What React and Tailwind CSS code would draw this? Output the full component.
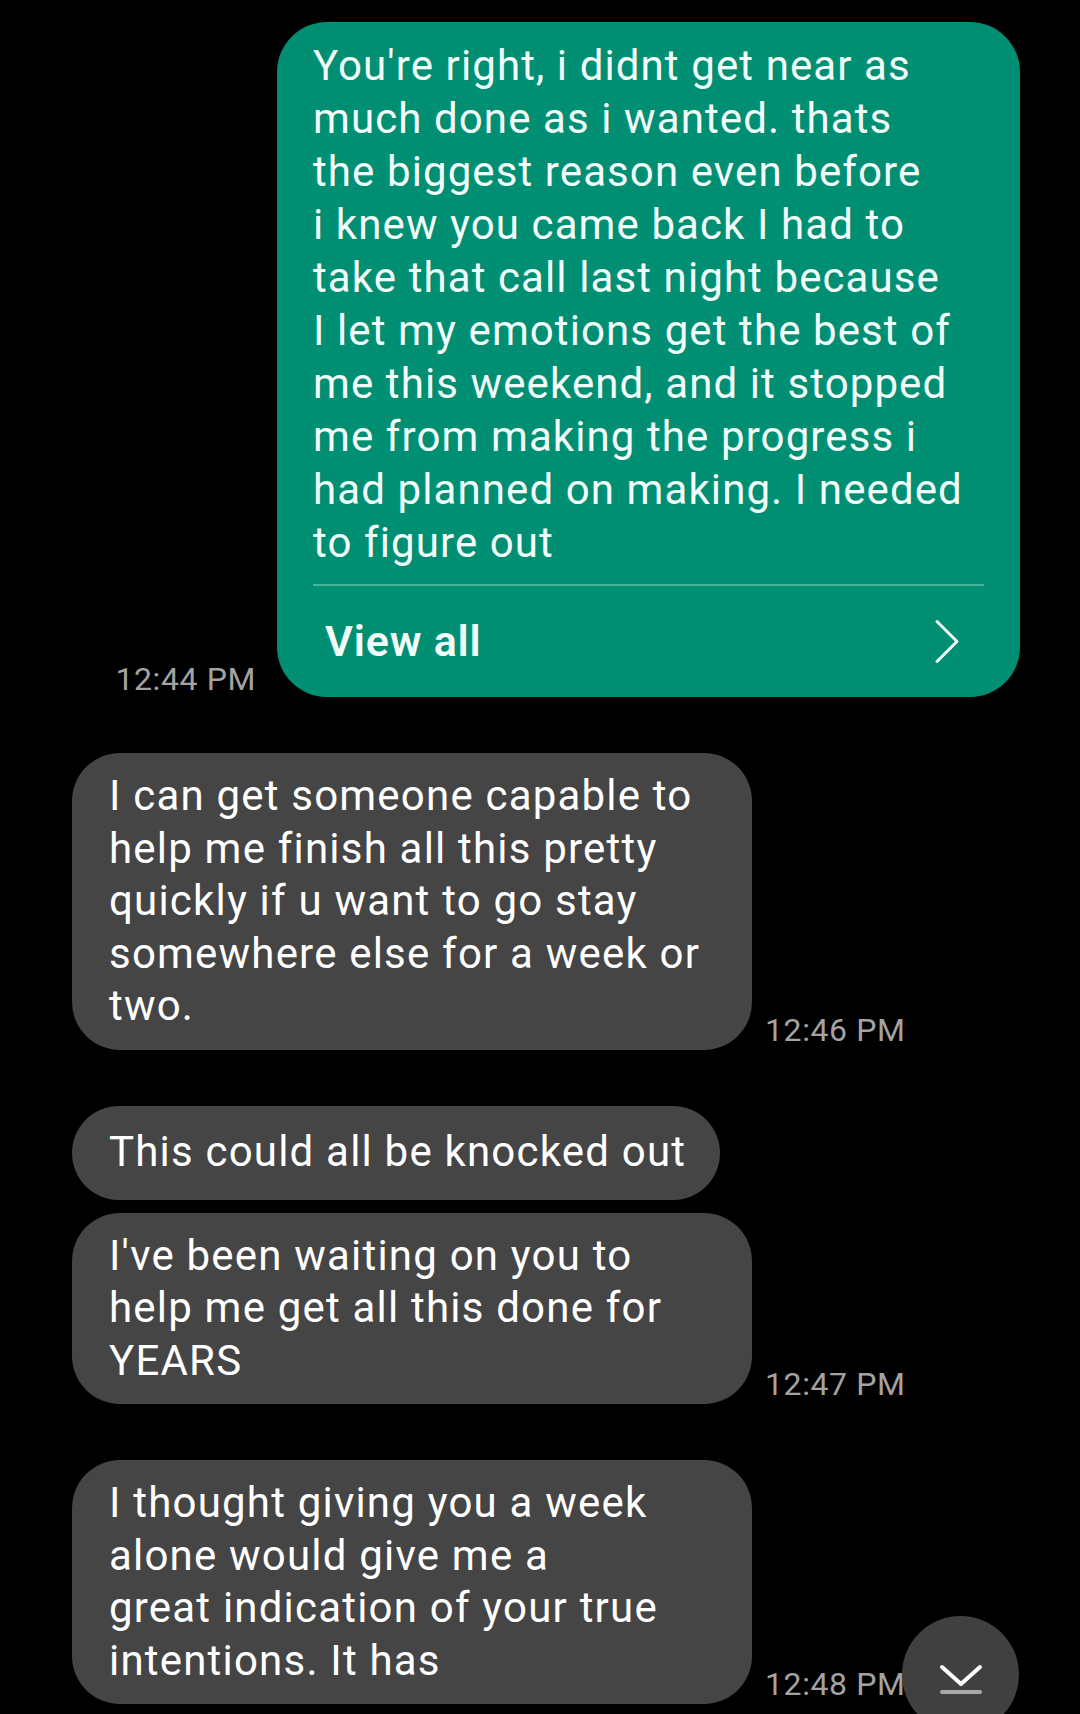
import React from "react";

const green = [
  "You're right, i didnt get near as",
  "much done as i wanted. thats",
  "the biggest reason even before",
  "i knew you came back I had to",
  "take that call last night because",
  "I let my emotions get the best of",
  "me this weekend, and it stopped",
  "me from making the progress i",
  "had planned on making. I needed",
  "to figure out",
];

const incoming = [
  {
    time: "12:46 PM",
    bubbles: [
      [
        "I can get someone capable to",
        "help me finish all this pretty",
        "quickly if u want to go stay",
        "somewhere else for a week or",
        "two.",
      ],
    ],
  },
  {
    time: "12:47 PM",
    bubbles: [
      ["This could all be knocked out"],
      ["I've been waiting on you to", "help me get all this done for", "YEARS"],
    ],
  },
  {
    time: "12:48 PM",
    bubbles: [
      [
        "I thought giving you a week",
        "alone would give me a",
        "great indication of your true",
        "intentions. It has",
      ],
    ],
  },
];

const Lines = ({ lines }) =>
  lines.map((l, i) => (
    <div key={i} className="whitespace-nowrap">
      {l}
    </div>
  ));

const Bubble = ({ lines }) => {
  const single = lines.length === 1;
  return (
    <div
      className={
        "bg-[#454545] text-white text-[42px] tracking-[1.2px] leading-[52.5px] pl-[37px] pr-[34px] " +
        (single
          ? "rounded-full min-h-[94px] flex items-center self-start"
          : "w-[680px] rounded-[48px] py-[17px]")
      }
    >
      <div>
        <Lines lines={lines} />
      </div>
    </div>
  );
};

export default function App() {
  return (
    <div
      className="relative h-[1714px] w-[1080px] overflow-hidden bg-black"
      style={{ fontFamily: "Roboto, 'Noto Sans', sans-serif" }}
    >
      <div className="flex flex-col pt-[22px]">
        {/* sent message */}
        <div className="flex items-end justify-end pr-[60px]">
          <span className="mr-[21px] text-[32px] tracking-[0.6px] leading-[36px] text-[#a3a3a3]">12:44 PM</span>
          <div className="w-[743px] rounded-[50px] bg-[#018f74] px-[36px] pt-[17px] text-[#f2fcf8]">
            <div className="text-[42px] tracking-[1.1px] leading-[53px]">
              <Lines lines={green} />
            </div>
            <div className="mt-[15px] h-[2px] bg-[#4fb39c]" />
            <div className="flex h-[111px] items-center justify-between pl-[12px] pr-[24px]">
              <span className="text-[43px] tracking-[0.8px] font-semibold leading-none">View all</span>
              <svg width="26" height="45" viewBox="0 0 26 45" fill="none">
                <path
                  d="M3 2.5 L23 22.5 L3 42.5"
                  stroke="#f2fcf8"
                  strokeWidth="3"
                  strokeLinecap="round"
                  strokeLinejoin="round"
                />
              </svg>
            </div>
          </div>
        </div>

        {/* received messages */}
        {incoming.map((g, gi) => (
          <div key={gi} className="mt-[56px] flex items-end pl-[72px]">
            <div className="flex flex-col gap-[13px]">
              {g.bubbles.map((b, bi) => (
                <Bubble key={bi} lines={b} />
              ))}
            </div>
            <span className="mb-[2px] ml-[13px] text-[32px] tracking-[0.6px] leading-[36px] text-[#a3a3a3]">
              {g.time}
            </span>
          </div>
        ))}
      </div>

      {/* scroll to bottom */}
      <div className="absolute left-[902px] top-[1616px] flex h-[117px] w-[117px] items-start justify-center rounded-full bg-[#404040] pt-[48px]">
        <svg width="46" height="32" viewBox="0 0 46 32" fill="none">
          <path
            d="M4 3 L23 20 L42 3"
            stroke="#ffffff"
            strokeWidth="4"
            strokeLinecap="round"
            strokeLinejoin="round"
          />
          <path d="M4 28 L42 28" stroke="#a8a8a8" strokeWidth="4" strokeLinecap="round" />
        </svg>
      </div>
    </div>
  );
}
